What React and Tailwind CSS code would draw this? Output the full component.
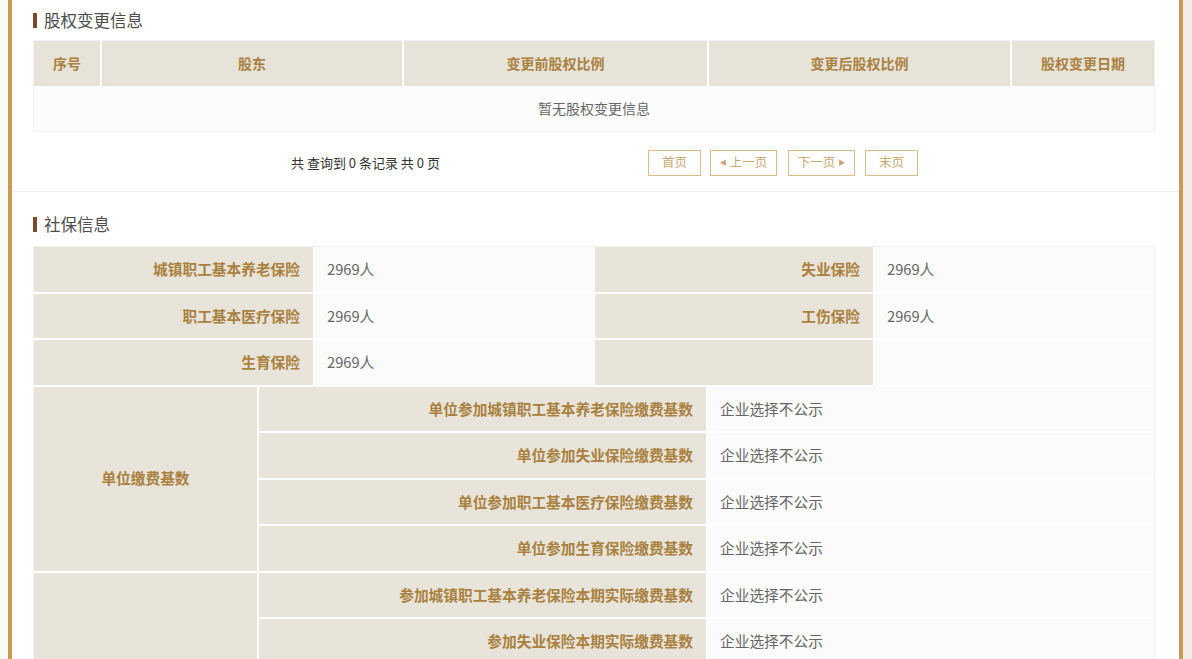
import React from 'react';

const FONT = "font-['Microsoft_YaHei','Noto_Sans_CJK_SC','Noto_Sans',sans-serif]";

const SectionTitle = ({ children }) => (
  <div className="flex h-[40px] items-center gap-[7px]">
    <span className="h-[15px] w-[4px] bg-[#7a4a2c]" />
    <span className="text-[16.5px] leading-none text-[#4d4d4d]">{children}</span>
  </div>
);

const equityHead = [
  { label: '序号', w: 'w-[66px]' },
  { label: '股东', w: 'w-[300px]' },
  { label: '变更前股权比例', w: 'w-[303px]' },
  { label: '变更后股权比例', w: 'w-[301px]' },
  { label: '股权变更日期', w: 'flex-1' },
];

const PageBtn = ({ children, className }) => (
  <button
    type="button"
    className={`flex h-[26px] items-center justify-center gap-[3px] border border-[#d9bd8f] bg-white text-[12.5px] text-[#c9a976] ${className}`}
  >
    {children}
  </button>
);

const insuranceRows = [
  ['城镇职工基本养老保险', '2969人', '失业保险', '2969人'],
  ['职工基本医疗保险', '2969人', '工伤保险', '2969人'],
  ['生育保险', '2969人', '', ''],
];

const unitBase = [
  '单位参加城镇职工基本养老保险缴费基数',
  '单位参加失业保险缴费基数',
  '单位参加职工基本医疗保险缴费基数',
  '单位参加生育保险缴费基数',
];

const actualBase = [
  '参加城镇职工基本养老保险本期实际缴费基数',
  '参加失业保险本期实际缴费基数',
];

const Label = ({ children }) => (
  <div className="flex h-[44.5px] items-center justify-end bg-[#e9e4da] pr-[13px] text-[14.7px] font-bold text-[#a8813f]">
    {children}
  </div>
);

const Value = ({ children }) => (
  <div className="flex h-[44.5px] items-center bg-[#fbfbfb] pl-[12px] text-[14.7px] text-[#666666]">
    {children}
  </div>
);

export default function App() {
  return (
    <div className={`flex h-[659px] w-[1192px] overflow-hidden bg-white ${FONT}`}>
      <div className="w-[8px] shrink-0 bg-[#fbfaf8]" />
      <div className="w-[1175px] shrink-0 border-x-4 border-[#c99b52] bg-white">
        {/* 股权变更信息 */}
        <div className="border-b border-[#efefef] pl-[21px] pr-[19px]">
          <SectionTitle>股权变更信息</SectionTitle>
          <div className="w-[1122px] border border-[#f1f1f1]">
            <div className="flex h-[45px] gap-[2px] bg-white">
              {equityHead.map((h) => (
                <div
                  key={h.label}
                  className={`flex ${h.w} items-center justify-center bg-[#e8e3d8] text-[14px] font-bold text-[#a8813f]`}
                >
                  {h.label}
                </div>
              ))}
            </div>
            <div className="flex h-[45px] items-center justify-center bg-[#fcfcfc] text-[14px] text-[#666666]">
              暂无股权变更信息
            </div>
          </div>
          <div className="flex h-[59px] items-center pt-[2px]">
            <div className="w-[615px] pl-[258px] text-[13px] text-[#333333]">共 查询到 0 条记录 共 0 页</div>
            <PageBtn className="w-[53px]">首页</PageBtn>
            <PageBtn className="ml-[9px] w-[67px]">
              <span className="text-[7px]">◀</span>上一页
            </PageBtn>
            <PageBtn className="ml-[11px] w-[67px]">
              下一页<span className="text-[7px]">▶</span>
            </PageBtn>
            <PageBtn className="ml-[10px] w-[53px]">末页</PageBtn>
          </div>
        </div>

        {/* 社保信息 */}
        <div className="pl-[21px] pt-[12px]">
          <SectionTitle>社保信息</SectionTitle>
          <div className="mt-[2px] w-[1122px] border border-[#f1f1f1] bg-white">
            <div className="grid grid-cols-[279px_278px_278px_1fr] gap-[2px]">
              {insuranceRows.map((row, i) => (
                <React.Fragment key={i}>
                  <Label>{row[0]}</Label>
                  <Value>{row[1]}</Value>
                  <Label>{row[2]}</Label>
                  <Value>{row[3]}</Value>
                </React.Fragment>
              ))}
            </div>
            <div className="mt-[2px] grid grid-cols-[223px_447px_1fr] gap-[2px]">
              <div className="row-span-4 flex items-center justify-center bg-[#e9e4da] text-[14.7px] font-bold text-[#a8813f]">
                单位缴费基数
              </div>
              {unitBase.map((t) => (
                <React.Fragment key={t}>
                  <Label>{t}</Label>
                  <Value>企业选择不公示</Value>
                </React.Fragment>
              ))}
              <div className="row-span-2 bg-[#e9e4da]" />
              {actualBase.map((t) => (
                <React.Fragment key={t}>
                  <Label>{t}</Label>
                  <Value>企业选择不公示</Value>
                </React.Fragment>
              ))}
            </div>
          </div>
        </div>
      </div>
      <div className="flex-1 bg-[#f1ede6]" />
    </div>
  );
}
